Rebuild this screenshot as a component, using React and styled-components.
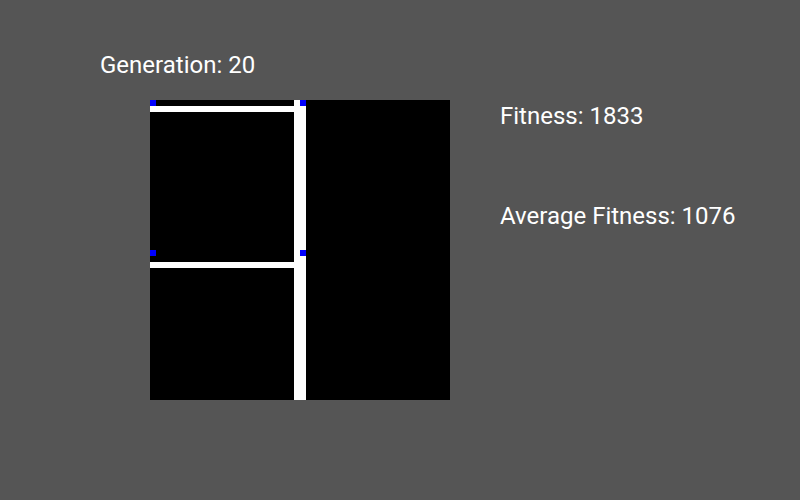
import React from "react";
import styled, { createGlobalStyle } from "styled-components";

const Global = createGlobalStyle`
  html, body { margin: 0; padding: 0; background: #555555; }
  body { font-family: Roboto, "Noto Sans", sans-serif; color: #ffffff; }
`;

const Page = styled.div`
  width: 800px;
  height: 500px;
  box-sizing: border-box;
  padding: 51px 0 0 100px;
  display: flex;
  flex-direction: column;
`;

const Label = styled.div`
  font-size: 24px;
  line-height: 28px;
  white-space: nowrap;
`;

const Row = styled.div`
  display: flex;
  gap: 50px;
  margin-top: 21px;
  margin-left: 50px;
`;

const Board = styled.svg`
  display: block;
  width: 300px;
  height: 300px;
  background: #000000;
  flex: none;
`;

const Stats = styled.div`
  display: flex;
  flex-direction: column;
  gap: 72px;
  padding-top: 2px;
`;

const walls = [
  { x: 0, y: 6, w: 144, h: 6 },
  { x: 0, y: 162, w: 144, h: 6 },
  { x: 144, y: 0, w: 12, h: 300 },
];

const agents = [
  { x: 0, y: 0 },
  { x: 150, y: 0 },
  { x: 0, y: 150 },
  { x: 150, y: 150 },
];

export default function App() {
  return (
    <>
      <Global />
      <Page>
        <Label>Generation: 20</Label>
        <Row>
          <Board viewBox="0 0 300 300">
            {walls.map((r, i) => (
              <rect key={i} x={r.x} y={r.y} width={r.w} height={r.h} fill="#ffffff" />
            ))}
            {agents.map((a, i) => (
              <rect key={i} x={a.x} y={a.y} width={6} height={6} fill="#0000ff" />
            ))}
          </Board>
          <Stats>
            <Label>Fitness: 1833</Label>
            <Label>Average Fitness: 1076</Label>
          </Stats>
        </Row>
      </Page>
    </>
  );
}
